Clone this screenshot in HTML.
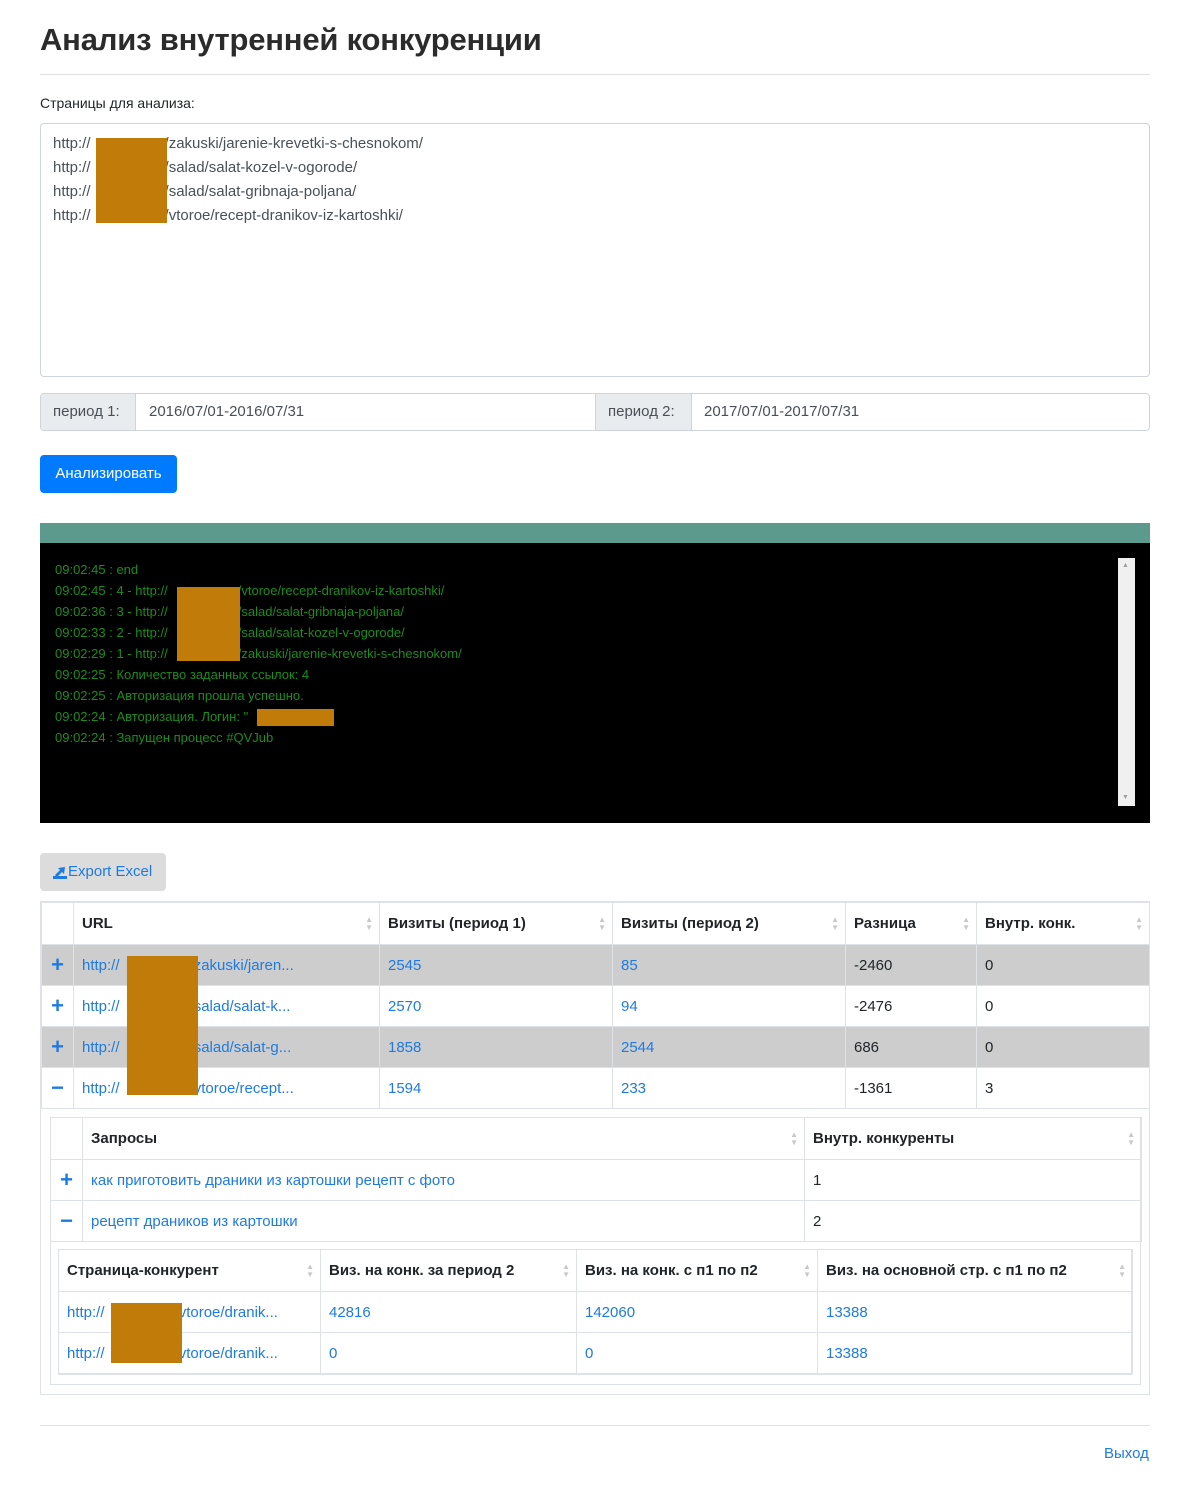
<!DOCTYPE html>
<html><head><meta charset="utf-8">
<style>
*{box-sizing:border-box;margin:0;padding:0}
body{width:1189px;height:1486px;background:#fff;font-family:"Liberation Sans",sans-serif;color:#212529;font-size:15px;position:relative;overflow:hidden}
.a{position:absolute}
.red{position:absolute;background:#c07b08}
a{color:#1e7be0;text-decoration:none}
table{border-collapse:collapse;table-layout:fixed;position:absolute;font-size:15px}
td,th{border:1px solid #dee2e6;padding:0 8px;text-align:left;white-space:nowrap;overflow:hidden;position:relative}
th{font-weight:bold;color:#212529}
th .s{position:absolute;right:6px;top:50%;margin-top:-8px;color:#c8c8c8;font-size:8px;line-height:8px}
.g td{background:#cdcdcd}
.ic{color:#1e7be0;font-weight:bold;font-size:22px;text-align:center;padding:0}
.log{position:absolute;left:55px;color:#1c8c1c;font-size:13px;line-height:21px}
.sp{display:inline-block}
</style></head><body>
<div class="a" style="left:40px;top:22px;font-size:31px;font-weight:bold;color:#2b2b2b;letter-spacing:-0.2px">Анализ внутренней конкуренции</div>
<div class="a" style="left:40px;top:74px;width:1110px;border-top:1px solid #e2e2e2"></div>
<div class="a" style="left:40px;top:95px;font-size:14px">Страницы для анализа:</div>
<div class="a" style="left:40px;top:123px;width:1110px;height:254px;border:1px solid #ced4da;border-radius:4px;padding:8px 12px;line-height:24px;color:#495057">
http://<span class="sp" style="width:74px"></span>/zakuski/jarenie-krevetki-s-chesnokom/<br>http://<span class="sp" style="width:74px"></span>/salad/salat-kozel-v-ogorode/<br>http://<span class="sp" style="width:74px"></span>/salad/salat-gribnaja-poljana/<br>http://<span class="sp" style="width:74px"></span>/vtoroe/recept-dranikov-iz-kartoshki/</div>
<div class="red" style="left:96px;top:138px;width:71px;height:85px"></div>
<div class="a" style="left:40px;top:393px;width:1110px;height:38px;border:1px solid #ced4da;border-radius:4px;overflow:hidden">
<div class="a" style="left:0;top:0;width:95px;height:36px;background:#e9ecef;border-right:1px solid #ced4da;line-height:36px;padding-left:12px;color:#495057">период 1:</div>
<div class="a" style="left:108px;top:0;line-height:36px;color:#495057">2016/07/01-2016/07/31</div>
<div class="a" style="left:554px;top:0;width:97px;height:36px;background:#e9ecef;border-left:1px solid #ced4da;border-right:1px solid #ced4da;line-height:36px;padding-left:12px;color:#495057">период 2:</div>
<div class="a" style="left:663px;top:0;line-height:36px;color:#495057">2017/07/01-2017/07/31</div>
</div>
<div class="a" style="left:40px;top:455px;width:137px;height:38px;background:#007bff;border-radius:4px;color:#fff;line-height:38px;text-align:center">Анализировать</div>
<div class="a" style="left:40px;top:523px;width:1110px;height:20px;background:#5b9a8d"></div>
<div class="a" style="left:40px;top:543px;width:1110px;height:280px;background:#000"></div>
<div class="a" style="left:1118px;top:558px;width:17px;height:248px;background:#f0f0f0"></div>
<div class="a" style="left:1122px;top:562px;color:#a0a0a0;font-size:7px">▲</div>
<div class="a" style="left:1122px;top:794px;color:#a0a0a0;font-size:7px">▼</div>
<div class="log" style="top:559px">09:02:45 : end<br>09:02:45 : 4 - http://<span class="sp" style="width:70px"></span>/vtoroe/recept-dranikov-iz-kartoshki/<br>09:02:36 : 3 - http://<span class="sp" style="width:70px"></span>/salad/salat-gribnaja-poljana/<br>09:02:33 : 2 - http://<span class="sp" style="width:70px"></span>/salad/salat-kozel-v-ogorode/<br>09:02:29 : 1 - http://<span class="sp" style="width:70px"></span>/zakuski/jarenie-krevetki-s-chesnokom/<br>09:02:25 : Количество заданных ссылок: 4<br>09:02:25 : Авторизация прошла успешно.<br>09:02:24 : Авторизация. Логин: "<span class="sp" style="width:80px"></span>"<br>09:02:24 : Запущен процесс #QVJub</div>
<div class="red" style="left:177px;top:587px;width:63px;height:74px"></div>
<div class="red" style="left:257px;top:709px;width:77px;height:17px"></div>
<div class="a" style="left:40px;top:853px;width:126px;height:38px;background:#dcdcdc;border-radius:4px;line-height:38px;padding-left:12px;color:#1e7be0">
<svg style="position:absolute;left:12px;top:11px" width="16" height="16" viewBox="0 0 16 16"><rect x="1" y="12" width="14" height="3" fill="#1e7be0"/><path d="M3 11 L8 6 L6 4 L13 3 L12 10 L10 8 L5 13Z" fill="#1e7be0"/></svg><span style="margin-left:16px">Export Excel</span></div>
<div class="a" style="left:40px;top:901px;width:1110px;height:494px;border:1px solid #dee2e6"></div>
<table style="left:41px;top:902px;width:1108px">
<colgroup><col style="width:32px"><col style="width:306px"><col style="width:233px"><col style="width:233px"><col style="width:131px"><col style="width:173px"></colgroup>
<tr style="height:42px"><th></th><th>URL<span class="s">▲<br>▼</span></th><th>Визиты (период 1)<span class="s">▲<br>▼</span></th><th>Визиты (период 2)<span class="s">▲<br>▼</span></th><th>Разница<span class="s">▲<br>▼</span></th><th>Внутр. конк.<span class="s">▲<br>▼</span></th></tr>
<tr class="g" style="height:41px"><td class="ic">+</td><td><a>http://<span class="sp" style="width:70px"></span>/zakuski/jaren...</a></td><td><a>2545</a></td><td><a>85</a></td><td>-2460</td><td>0</td></tr>
<tr style="height:41px"><td class="ic">+</td><td><a>http://<span class="sp" style="width:70px"></span>/salad/salat-k...</a></td><td><a>2570</a></td><td><a>94</a></td><td>-2476</td><td>0</td></tr>
<tr class="g" style="height:41px"><td class="ic">+</td><td><a>http://<span class="sp" style="width:70px"></span>/salad/salat-g...</a></td><td><a>1858</a></td><td><a>2544</a></td><td>686</td><td>0</td></tr>
<tr style="height:41px"><td class="ic">−</td><td><a>http://<span class="sp" style="width:70px"></span>/vtoroe/recept...</a></td><td><a>1594</a></td><td><a>233</a></td><td>-1361</td><td>3</td></tr>
</table>
<div class="red" style="left:127px;top:956px;width:71px;height:139px"></div>
<div class="a" style="left:50px;top:1117px;width:1091px;height:268px;border:1px solid #dee2e6"></div>
<table style="left:50px;top:1117px;width:1091px">
<colgroup><col style="width:32px"><col style="width:722px"><col style="width:337px"></colgroup>
<tr style="height:42px"><th></th><th>Запросы<span class="s">▲<br>▼</span></th><th>Внутр. конкуренты<span class="s">▲<br>▼</span></th></tr>
<tr style="height:41px"><td class="ic">+</td><td><a>как приготовить драники из картошки рецепт с фото</a></td><td>1</td></tr>
<tr style="height:41px"><td class="ic">−</td><td><a>рецепт драников из картошки</a></td><td>2</td></tr>
</table>
<div class="a" style="left:58px;top:1249px;width:1074px;height:126px;border:1px solid #dee2e6"></div>
<table style="left:58px;top:1249px;width:1074px">
<colgroup><col style="width:262px"><col style="width:256px"><col style="width:241px"><col style="width:315px"></colgroup>
<tr style="height:42px"><th>Страница-конкурент<span class="s">▲<br>▼</span></th><th>Виз. на конк. за период 2<span class="s">▲<br>▼</span></th><th>Виз. на конк. с п1 по п2<span class="s">▲<br>▼</span></th><th>Виз. на основной стр. с п1 по п2<span class="s">▲<br>▼</span></th></tr>
<tr style="height:41px"><td><a>http://<span class="sp" style="width:70px"></span>/vtoroe/dranik...</a></td><td><a>42816</a></td><td><a>142060</a></td><td><a>13388</a></td></tr>
<tr style="height:41px"><td><a>http://<span class="sp" style="width:70px"></span>/vtoroe/dranik...</a></td><td><a>0</a></td><td><a>0</a></td><td><a>13388</a></td></tr>
</table>
<div class="red" style="left:111px;top:1303px;width:71px;height:60px"></div>
<div class="a" style="left:40px;top:1425px;width:1110px;border-top:1px solid #e2e2e2"></div>
<div class="a" style="left:1104px;top:1445px"><a>Выход</a></div>
</body></html>
